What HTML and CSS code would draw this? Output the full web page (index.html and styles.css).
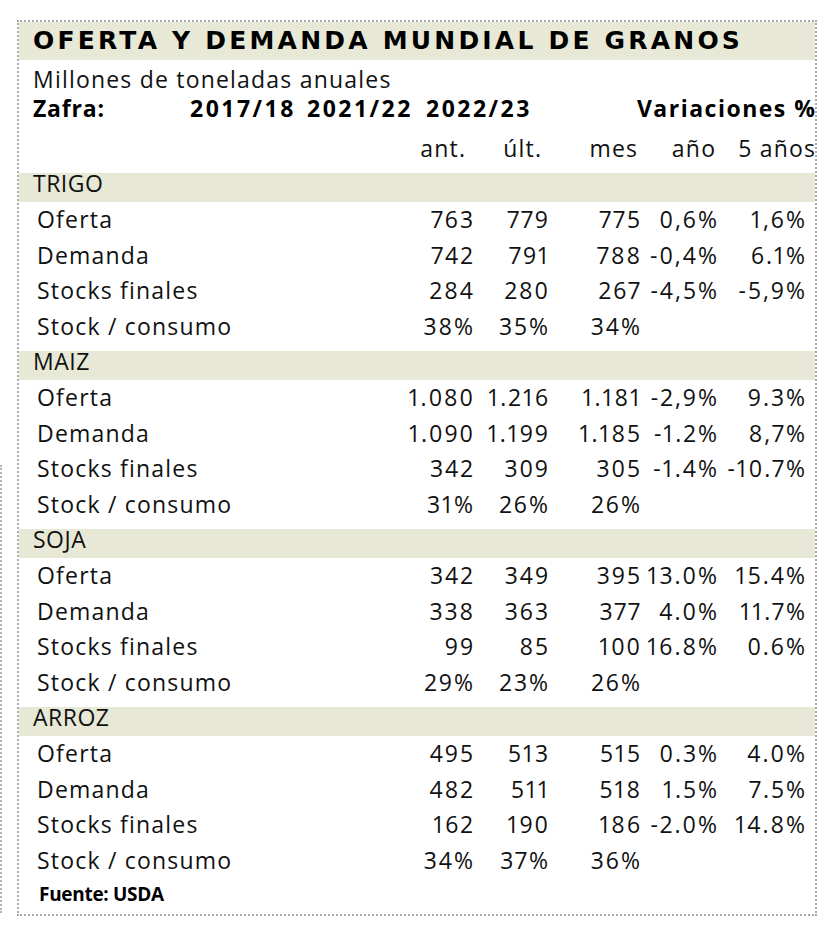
FILE: index.html
```html
<!DOCTYPE html>
<html lang="es">
<head>
<meta charset="utf-8">
<title>Oferta y demanda mundial de granos</title>
<link rel="stylesheet" href="styles.css">
</head>
<body>
<div class="card">
  <div class="title">OFERTA Y DEMANDA MUNDIAL DE GRANOS</div>
  <div class="subtitle">Millones de toneladas anuales</div>
  <div class="head">
    <span class="zafra">Zafra:</span><span>2017/18</span><span>2021/22</span><span>2022/23</span><span class="var">Variaciones %</span>
  </div>
  <div class="subhead">
    <span></span><span class="s">ant.</span><span class="s">últ.</span><span class="s">mes</span><span class="s">año</span><span class="s">5 años</span>
  </div>

  <section class="group">
    <div class="band">TRIGO</div>
    <div class="row"><span class="label">Oferta</span><span class="n">763</span><span class="n">779</span><span class="n">775</span><span class="n">0,6%</span><span class="n">1,6%</span></div>
    <div class="row"><span class="label">Demanda</span><span class="n">742</span><span class="n">791</span><span class="n">788</span><span class="n">-0,4%</span><span class="n">6.1%</span></div>
    <div class="row"><span class="label">Stocks finales</span><span class="n">284</span><span class="n">280</span><span class="n">267</span><span class="n">-4,5%</span><span class="n">-5,9%</span></div>
    <div class="row"><span class="label">Stock / consumo</span><span class="n">38%</span><span class="n">35%</span><span class="n">34%</span></div>
  </section>

  <section class="group">
    <div class="band">MAIZ</div>
    <div class="row"><span class="label">Oferta</span><span class="n">1.080</span><span class="n">1.216</span><span class="n">1.181</span><span class="n">-2,9%</span><span class="n">9.3%</span></div>
    <div class="row"><span class="label">Demanda</span><span class="n">1.090</span><span class="n">1.199</span><span class="n">1.185</span><span class="n">-1.2%</span><span class="n">8,7%</span></div>
    <div class="row"><span class="label">Stocks finales</span><span class="n">342</span><span class="n">309</span><span class="n">305</span><span class="n">-1.4%</span><span class="n">-10.7%</span></div>
    <div class="row"><span class="label">Stock / consumo</span><span class="n">31%</span><span class="n">26%</span><span class="n">26%</span></div>
  </section>

  <section class="group">
    <div class="band">SOJA</div>
    <div class="row"><span class="label">Oferta</span><span class="n">342</span><span class="n">349</span><span class="n">395</span><span class="n">13.0%</span><span class="n">15.4%</span></div>
    <div class="row"><span class="label">Demanda</span><span class="n">338</span><span class="n">363</span><span class="n">377</span><span class="n">4.0%</span><span class="n">11.7%</span></div>
    <div class="row"><span class="label">Stocks finales</span><span class="n">99</span><span class="n">85</span><span class="n">100</span><span class="n">16.8%</span><span class="n">0.6%</span></div>
    <div class="row"><span class="label">Stock / consumo</span><span class="n">29%</span><span class="n">23%</span><span class="n">26%</span></div>
  </section>

  <section class="group">
    <div class="band">ARROZ</div>
    <div class="row"><span class="label">Oferta</span><span class="n">495</span><span class="n">513</span><span class="n">515</span><span class="n">0.3%</span><span class="n">4.0%</span></div>
    <div class="row"><span class="label">Demanda</span><span class="n">482</span><span class="n">511</span><span class="n">518</span><span class="n">1.5%</span><span class="n">7.5%</span></div>
    <div class="row"><span class="label">Stocks finales</span><span class="n">162</span><span class="n">190</span><span class="n">186</span><span class="n">-2.0%</span><span class="n">14.8%</span></div>
    <div class="row"><span class="label">Stock / consumo</span><span class="n">34%</span><span class="n">37%</span><span class="n">36%</span></div>
  </section>

  <div class="source">Fuente: USDA</div>
</div>
</body>
</html>
```

FILE: styles.css
```css
html, body {
  margin: 0;
  padding: 0;
  background: #ffffff;
}

body {
  position: relative;
  padding: 20px 0 0 17px;
  font-family: "Open Sans", "Noto Sans", "Liberation Sans", sans-serif;
  color: #111111;
  font-size: 23px;
  letter-spacing: 1.2px;
}

body::before {
  content: "";
  position: absolute;
  left: 0;
  top: 465px;
  height: 448px;
  border-left: 2px dotted #b5b5b5;
}

.card {
  box-sizing: border-box;
  width: 800px;
  height: 896px;
  border: 2px dotted #a9a9a9;
  overflow: hidden;
}

.title {
  height: 38px;
  line-height: 38px;
  background: #e8e8d6;
  padding-left: 14px;
  font-family: "DejaVu Sans", "Liberation Sans", sans-serif;
  font-weight: bold;
  font-size: 25px;
  letter-spacing: 3.2px;
  color: #000000;
  white-space: nowrap;
}

.subtitle {
  height: 38px;
  line-height: 38px;
  padding-left: 14px;
}

.head {
  display: grid;
  grid-template-columns: 171px 117px 119px 1fr auto;
  height: 20px;
  line-height: 20px;
  font-weight: bold;
  letter-spacing: 2.5px;
  color: #000000;
  white-space: nowrap;
}

.head .zafra {
  padding-left: 14px;
  letter-spacing: 0.8px;
}

.head .var {
  letter-spacing: 1.5px;
  margin-right: -1.5px;
}

.subhead {
  display: grid;
  grid-template-columns: 381px 65px 76px 96px 78px 100px;
  box-sizing: border-box;
  height: 55px;
  padding-top: 14px;
  line-height: 32px;
  white-space: nowrap;
}

.subhead .s {
  text-align: right;
  margin-right: -1.2px;
}

.group {
  padding-bottom: 7px;
}

.band {
  height: 29px;
  box-sizing: border-box;
  line-height: 20px;
  padding-left: 14px;
  background: #e8e8d6;
  letter-spacing: 0.5px;
}

.row {
  display: grid;
  grid-template-columns: 381px 73px 75px 92px 77px 88px;
  height: 35.5px;
  line-height: 35.5px;
  white-space: nowrap;
}

.label {
  padding-left: 18px;
}

.n {
  text-align: right;
  font-variant-numeric: proportional-nums;
  letter-spacing: 2px;
  margin-right: -2px;
}

.source {
  padding-left: 20px;
  line-height: 19px;
  padding-top: 0;
  font-size: 19px;
  font-weight: bold;
  letter-spacing: -0.3px;
  color: #000000;
}
```
